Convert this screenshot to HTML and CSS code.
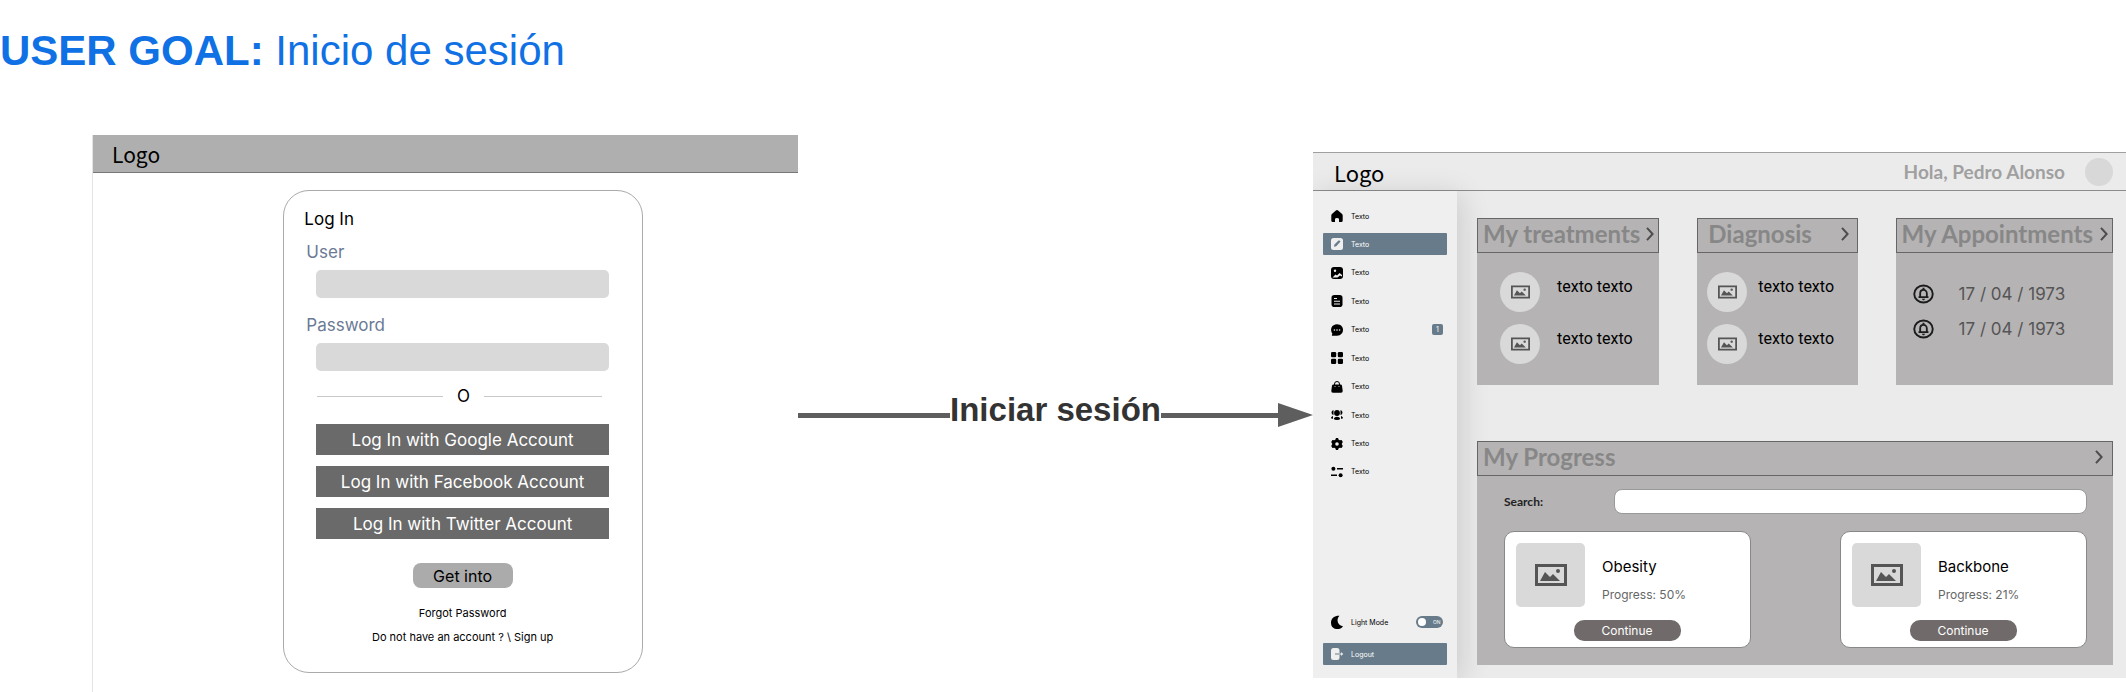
FILE: index.html
```html
<!DOCTYPE html>
<html lang="es">
<head>
<meta charset="utf-8">
<title>User goal: Inicio de sesión</title>
<link rel="stylesheet" href="styles.css">
</head>
<body>
<svg class="sprite" aria-hidden="true">
  <symbol id="picture" viewBox="0 0 32 22">
    <path fill-rule="evenodd" d="M0 0h32v22H0zM3 3v16h26V3z"/>
    <path d="M5 17l5-9 5 5 3-3 7 7z"/><circle cx="23" cy="7" r="2"/>
  </symbol>
  <symbol id="chevron" viewBox="0 0 8 14">
    <path d="M1 .8l5.600 6.200-5.600 6.200" fill="none" stroke="currentColor" stroke-width="2"/>
  </symbol>
  <symbol id="bell" viewBox="0 0 22 20">
    <ellipse cx="11" cy="10" rx="9.700" ry="8.900" fill="none" stroke="currentColor" stroke-width="2"/>
    <path d="M7.500 13V9.500c0-5 7-5 7 0V13M5.800 13.200h10.400" fill="none" stroke="currentColor" stroke-width="1.900"/>
    <path d="M10 3.500h2v2h-2zM9.300 15h3.400l-1 1.500h-1.400z"/>
  </symbol>
</svg>

<h1 class="goal"><strong>USER GOAL:</strong> Inicio de sesión</h1>

<main class="flow">
  <section class="login-frame">
    <header class="login-bar">Logo</header>
    <form class="login-card">
      <h2 class="login-title">Log In</h2>
      <label class="field-label" for="user">User</label>
      <input class="field" id="user" type="text">
      <label class="field-label" for="password">Password</label>
      <input class="field" id="password" type="password">
      <div class="divider"><span>O</span></div>
      <div class="providers">
        <button class="provider" type="button">Log In with Google Account</button>
        <button class="provider" type="button">Log In with Facebook Account</button>
        <button class="provider" type="button">Log In with Twitter Account</button>
      </div>
      <button class="submit" type="submit">Get into</button>
      <a class="login-link" href="#forgot">Forgot Password</a>
      <a class="login-link" href="#signup">Do not have an account ? \ Sign up</a>
    </form>
  </section>

  <div class="connector">
    <span class="side"><span class="line"></span></span>
    <span class="connector-label">Iniciar sesión</span>
    <span class="side"><span class="line"></span><svg class="arrow" viewBox="0 0 35 24"><path d="M0 0l35 12L0 24z"/></svg></span>
  </div>

  <section class="dashboard">
    <header class="dash-bar">
      <span class="dash-logo">Logo</span>
      <span class="hello">Hola, Pedro Alonso</span>
      <span class="avatar"></span>
    </header>
    <div class="dash-body">
      <aside class="sidebar">
        <nav class="menu">
          <a class="item" href="#1"><svg class="ico" viewBox="0 0 12 12"><path d="M6 0q.6 0 1.100.5l4 3.600q.6.600.6 1.400v5Q11.700 12 10.200 12H8V9.300Q8 8 6 8T4 9.300V12H1.800Q.3 12 .3 10.500v-5q0-.8.6-1.400l4-3.600Q5.400 0 6 0z"/></svg>Texto</a>
          <a class="item active" href="#2"><svg class="ico" viewBox="0 0 12 12"><rect width="12" height="12" rx="2.500"/><path class="cut" d="M3 9l.5-2.500 4-4q1.300-.5 2 1l-4 4.500z"/></svg>Texto</a>
          <a class="item" href="#3"><svg class="ico" viewBox="0 0 12 12"><rect width="12" height="12" rx="3"/><circle class="cut" cx="4" cy="3.800" r="1.200"/><path class="cut" d="M1.500 10.500l3-3 1.500 1 2.500-2.500 2.500 2v1.500l-2-1-2.500 2z"/></svg>Texto</a>
          <a class="item" href="#4"><svg class="ico" viewBox="0 0 12 12"><rect x=".5" width="11" height="12" rx="2.800"/><path class="cut" d="M3 3h3v1H3zM3 5.700h6v1H3zM3 8.400h6v1H3z"/></svg>Texto</a>
          <a class="item" href="#5"><svg class="ico" viewBox="0 0 12 12"><path d="M6 .3c8 0 8 11.400 0 11.400H.8l.5-2.200C-1.500 5.500.8.300 6 .3z"/><circle class="cut" cx="3.400" cy="6" r=".8"/><circle class="cut" cx="6" cy="6" r=".8"/><circle class="cut" cx="8.600" cy="6" r=".8"/></svg>Texto<span class="badge">1</span></a>
          <a class="item" href="#6"><svg class="ico" viewBox="0 0 12 12"><rect width="5.200" height="5.200" rx="1.300"/><rect x="6.800" width="5.200" height="5.200" rx="1.300"/><rect y="6.800" width="5.200" height="5.200" rx="1.300"/><rect x="6.800" y="6.800" width="5.200" height="5.200" rx="1.300"/></svg>Texto</a>
          <a class="item" href="#7"><svg class="ico" viewBox="0 0 12 12"><path d="M3.500 4V3q0-2.500 2.500-2.500T8.500 3v1" fill="none" stroke="#000"/><path d="M2.500 3.500h7q1.300 0 1.500 1.300l.7 5q.2 2-1.700 2H2q-1.900 0-1.700-2l.7-5q.2-1.300 1.500-1.300z"/><path class="cut" d="M3.500 5h1v.8h-1zM7.500 5h1v.8h-1z"/></svg>Texto</a>
          <a class="item" href="#8"><svg class="ico" viewBox="0 0 12 12"><circle cx="6" cy="4" r="2.900"/><path d="M2.500 1v5q-2-.5-2-2.500t2-2.500zM9.500 1v5q2-.5 2-2.500t-2-2.500zM0 8.500l2-1.700v3Q0 10 0 8.500zM12 8.500l-2-1.700v3q2 .2 2-1.300zM2.800 9.500q.7-1.800 3.200-1.800t3.200 1.800Q9 11 6 11T2.800 9.500z"/></svg>Texto</a>
          <a class="item" href="#9"><svg class="ico" viewBox="0 0 12 12"><path fill-rule="evenodd" d="M5 0h2l.7 1.700 1 .6 1.900-.2 1.200 2L10.700 6l1.100 1.900-1.200 2-1.900-.2-1 .6L7 12H5l-.7-1.700-1-.6-1.900.2-1.200-2L1.300 6 .2 4.100l1.200-2 1.900.2 1-.6zM6 4.200a1.800 1.800 0 1 0 0 3.600 1.800 1.800 0 0 0 0-3.600z"/></svg>Texto</a>
          <a class="item" href="#10"><svg class="ico" viewBox="0 0 12 12"><circle cx="2.400" cy="2.700" r="2"/><circle cx="9.600" cy="9.300" r="2"/><path d="M6 1.900h6v1.600H6zM0 8.500h6v1.600H0z"/></svg>Texto</a>
        </nav>
        <div class="menu-end">
          <label class="item" for="mode"><svg class="ico moon" viewBox="0 0 12 14"><path d="M8.500.3C4.500 4 7 10.500 12 10.700 9.500 15 0 15 0 7.200 0 2.500 4 0 8.500.3z"/></svg>Light Mode
            <span class="switch"><input class="switch-box" id="mode" type="checkbox" checked><span class="knob"></span>ON</span>
          </label>
          <a class="item active" href="#logout"><svg class="ico" viewBox="0 0 12 12"><rect width="8.500" height="12" rx="2.500"/><path class="cut" d="M4 5.500h4.500v1H4z"/><path d="M8.500 5.500h1.700V4L12.200 6l-2 2V6.500H8.500z"/></svg>Logout</a>
        </div>
      </aside>

      <div class="content">
        <div class="tiles">
          <article class="panel">
            <h2 class="panel-head">My treatments <svg class="chev"><use href="#chevron"/></svg></h2>
            <ul class="rows inset">
              <li class="row"><span class="dot"><svg class="pic"><use href="#picture"/></svg></span>texto texto</li>
              <li class="row"><span class="dot"><svg class="pic"><use href="#picture"/></svg></span>texto texto</li>
            </ul>
          </article>
          <article class="panel">
            <h2 class="panel-head roomy">Diagnosis <svg class="chev"><use href="#chevron"/></svg></h2>
            <ul class="rows tight">
              <li class="row"><span class="dot"><svg class="pic"><use href="#picture"/></svg></span>texto texto</li>
              <li class="row"><span class="dot"><svg class="pic"><use href="#picture"/></svg></span>texto texto</li>
            </ul>
          </article>
          <article class="panel">
            <h2 class="panel-head">My Appointments <svg class="chev"><use href="#chevron"/></svg></h2>
            <ul class="dates">
              <li class="date"><svg class="bell"><use href="#bell"/></svg>17 / 04 / 1973</li>
              <li class="date"><svg class="bell"><use href="#bell"/></svg>17 / 04 / 1973</li>
            </ul>
          </article>
        </div>

        <article class="panel progress">
          <h2 class="panel-head">My Progress <svg class="chev"><use href="#chevron"/></svg></h2>
          <div class="progress-body">
            <div class="search">
              <label class="search-label" for="search">Search:</label>
              <input class="search-box" id="search" type="text">
            </div>
            <div class="cards">
              <div class="card">
                <div class="card-top">
                  <span class="thumb"><svg class="pic-big"><use href="#picture"/></svg></span>
                  <div><h3 class="card-title">Obesity</h3><p class="card-text">Progress: 50%</p></div>
                </div>
                <button class="continue" type="button">Continue</button>
              </div>
              <div class="card">
                <div class="card-top">
                  <span class="thumb"><svg class="pic-big"><use href="#picture"/></svg></span>
                  <div><h3 class="card-title">Backbone</h3><p class="card-text">Progress: 21%</p></div>
                </div>
                <button class="continue" type="button">Continue</button>
              </div>
            </div>
          </div>
        </article>
      </div>
    </div>
  </section>
</main>
</body>
</html>
```
FILE: styles.css
```css
* { box-sizing: border-box; margin: 0; padding: 0; }
body {
  min-height: 100vh;
  display: flex;
  flex-direction: column;
  background: #fff;
  color: #000;
  font-family: Inter, "Liberation Sans", sans-serif;
}
a { color: inherit; text-decoration: none; }
ul { list-style: none; }
button, input { font: inherit; border: 0; }
svg { display: block; flex: none; }
.sprite { position: absolute; width: 0; height: 0; }

.goal {
  padding: 27px 0 60px;
  font: 400 42px/48px "Liberation Sans", Arial, sans-serif;
  color: #1071e5;
}

.flow {
  flex: 1;
  display: grid;
  grid-template-columns: 706fr 515fr 813fr;
  padding-left: 92px;
}

/* Login screen */
.login-frame { border-left: 1px solid #e4e4e4; }
.login-bar {
  height: 38px;
  padding-left: 19px;
  background: #afafaf;
  border-bottom: 1px solid #777;
  font: 21px/38px "Noto Sans CJK SC", sans-serif;
}
.login-card {
  display: flex;
  flex-direction: column;
  width: 51%;
  margin: 17px 0 0 27%;
  padding: 16px 33px 23px 32px;
  border: 1px solid #aaa;
  border-radius: 26px;
}
.login-title, .field-label {
  font-size: 17px;
  font-weight: 400;
  line-height: 24px;
}
.login-title { margin: 0 0 9px -12px; }
.field-label { margin-left: -10px; color: #6b7a96; }
.field {
  height: 28px;
  margin: 6px 0 15px;
  padding: 0 8px;
  border-radius: 5px;
  background: #d9d9d9;
}
.divider {
  display: grid;
  grid-template-columns: 127fr auto 119fr;
  align-items: center;
  gap: 14px;
  margin: -2px 7px 16px 1px;
  font-size: 17px;
  line-height: 24px;
}
.divider::before, .divider::after { content: ""; height: 1px; background: #c8c8c8; }
.providers { display: grid; gap: 11px; }
.provider { height: 31px; background: #6a6a6a; color: #fff; font-size: 17px; }
.submit {
  align-self: center;
  width: 100px;
  height: 25px;
  margin: 24px 0 13px;
  border-radius: 8px;
  background: #ababab;
  font-size: 16px;
}
.login-link { align-self: center; font-size: 11px; line-height: 24px; }

/* Connector between both screens */
.connector {
  display: flex;
  align-items: center;
  align-self: start;
  margin-top: 256px;
}
.side { flex: 1; display: flex; align-items: center; }
.line { flex: 1; height: 5px; background: #5e5e5e; }
.connector-label {
  padding-bottom: 10px;
  font: 700 33px/38px "Liberation Sans", Arial, sans-serif;
  color: #333;
}
.arrow { width: 35px; height: 24px; fill: #5e5e5e; }

/* Dashboard screen */
.dashboard {
  align-self: start;
  margin-top: 17px;
  overflow: hidden;
  background: #ebebeb;
  border-top: 1px solid #a0a0a0;
}
.dash-bar {
  display: flex;
  align-items: center;
  height: 38px;
  padding: 0 13px 0 21px;
  border-bottom: 1px solid #8c8c8c;
}
.dash-logo { flex: 1; font: 22px/36px "Noto Sans CJK SC", sans-serif; }
.hello { font: 700 19px/24px Lato, sans-serif; color: #a0a0a0; }
.avatar { width: 28px; height: 28px; margin-left: 20px; border-radius: 50%; background: #d8d8d8; }
.dash-body { display: flex; }

.sidebar {
  display: flex;
  flex-direction: column;
  width: 144px;
  padding: 14px 10px 13px;
  background: #efefef;
  box-shadow: 4px 4px 28px rgba(0, 0, 0, .14);
  font-size: 7px;
}
.menu { flex: 1; display: flex; flex-direction: column; justify-content: space-between; margin-bottom: 128px; }
.menu-end { display: grid; gap: 10px; }
.item { display: flex; align-items: center; gap: 8px; height: 22px; padding: 0 4px 0 8px; border-radius: 1px; }
.active { background: #677b8a; color: #fff; }
.ico { width: 12px; height: 12px; fill: #000; overflow: visible; }
.moon { height: 15px; }
.cut { fill: #efefef; }
.active .ico { fill: #efefef; }
.active .cut { fill: #677b8a; }
.badge { margin-left: auto; width: 11px; border-radius: 2px; background: #677b8a; color: #fff; text-align: center; line-height: 11px; }
.switch {
  display: flex;
  align-items: center;
  gap: 7px;
  width: 27px;
  height: 12px;
  margin-left: auto;
  padding-left: 2px;
  border-radius: 6px;
  background: #677b8a;
  color: #fff;
  font-size: 5px;
}
.switch-box { position: absolute; opacity: 0; }
.knob { width: 8px; height: 8px; border-radius: 50%; background: #fff; }

.content { flex: 1; padding: 27px 13px 13px 20px; }
.tiles { display: grid; grid-template-columns: 182fr 160fr 217fr; gap: 38px; margin-bottom: 56px; }
.panel { background: #b5b3b4; }
.panel-head {
  display: flex;
  align-items: center;
  justify-content: space-between;
  height: 35px;
  padding: 0 4px 4px 5px;
  border: 1px solid #666;
  font: 700 24px/30px Lato, sans-serif;
  color: #878787;
  white-space: nowrap;
}
.roomy { padding-right: 8px; padding-left: 10px; }
.chev { width: 8px; height: 14px; color: #4d4d4d; }
.rows { display: grid; gap: 12px; padding: 19px 0 21px; font-size: 16px; line-height: 30px; font-family: Roboto, sans-serif; }
.row { display: flex; align-items: flex-start; }
.inset { padding-left: 23px; }
.inset .row { gap: 17px; }
.tight { padding-left: 10px; }
.tight .row { gap: 11px; }
.dot { display: grid; place-items: center; width: 40px; height: 40px; border-radius: 50%; background: #d9d9d9; }
.pic { width: 19px; height: 14px; fill: #555; }
.dates { display: grid; gap: 11px; padding: 29px 0 0 17px; }
.date { display: flex; align-items: center; gap: 25px; font-size: 17px; line-height: 24px; color: #555; }
.bell { width: 21px; height: 20px; color: #1c1c1c; fill: #1c1c1c; }

.progress .panel-head { padding-right: 9px; }
.progress-body { padding: 13px 26px 17px 27px; }
.search { display: flex; align-items: center; margin-bottom: 17px; }
.search-label { width: 110px; font: 700 12px/24px Lato, sans-serif; color: #222; }
.search-box { flex: 1; height: 25px; padding: 0 8px; border: 1px solid #999; border-radius: 8px; background: #fff; }
.cards { display: flex; justify-content: space-between; }
.card {
  display: flex;
  flex-direction: column;
  width: 247px;
  padding: 11px 12px 6px 11px;
  border: 1px solid #888;
  border-radius: 10px;
  background: #fff;
}
.card-top { display: flex; gap: 17px; }
.thumb { display: grid; place-items: center; width: 69px; height: 64px; border-radius: 5px; background: #d9d9d9; }
.pic-big { width: 32px; height: 22px; fill: #555; }
.card-title { margin-top: 12px; font-size: 15px; font-weight: 400; line-height: 24px; }
.card-text { margin-top: 4px; font-size: 12px; line-height: 24px; color: #666; }
.continue { align-self: center; width: 107px; height: 21px; margin-top: 13px; border-radius: 10px; background: #706a6a; color: #fff; font-size: 12px; }
```
